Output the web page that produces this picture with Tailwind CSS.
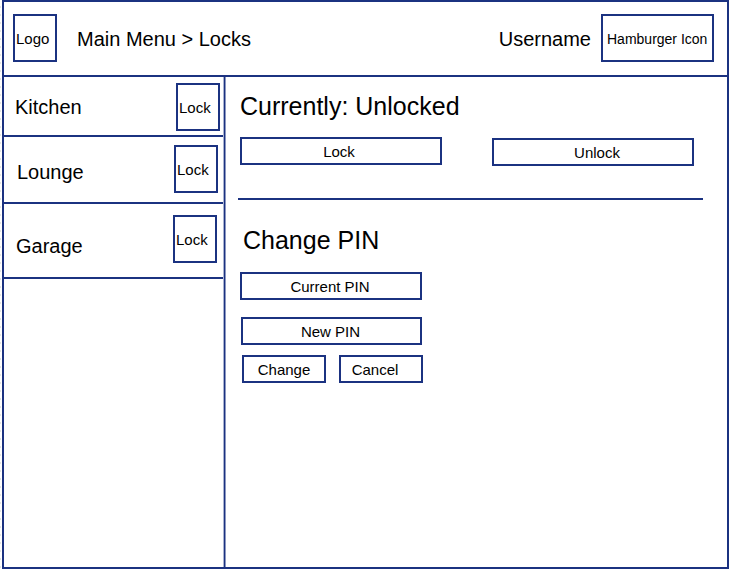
<!DOCTYPE html>
<html lang="en">
<head>
<meta charset="utf-8">
<meta name="viewport" content="width=device-width, initial-scale=1">
<title>Locks</title>
<script src="https://cdn.jsdelivr.net/npm/@tailwindcss/browser@4"></script>
</head>
<body class="bg-white bg-[linear-gradient(#e6e6e6_2px,transparent_2px)] bg-[length:1px_8px] bg-repeat-y bg-[position:0_6px] pl-[2px] pr-px pb-[3px] text-black font-['Liberation_Sans',Arial,sans-serif] text-[15px] leading-5">
<div class="flex min-h-[calc(100vh-3px)] flex-col border-2 border-[#1b3281] bg-white">
  <header class="flex items-center border-b-2 border-[#1b3281] pt-3 pr-[13px] pb-[13px] pl-[9px]">
    <a href="#" class="flex h-12 w-11 items-center border-2 border-[#1b3281] pt-0.5 pl-px">Logo</a>
    <nav aria-label="Breadcrumb" class="ml-5 pt-0.5 text-xl"><a href="#">Main Menu</a> &gt; <a href="#">Locks</a></nav>
    <span class="ml-auto pt-0.5 text-xl">Username</span>
    <button type="button" class="ml-[10px] flex h-12 w-[113px] items-center border-2 border-[#1b3281] pt-0.5 pl-1 text-sm whitespace-nowrap">Hamburger Icon</button>
  </header>

  <div class="flex grow">
    <aside class="w-[219px] shrink-0">
      <ul>
        <li class="flex items-center justify-between border-b-2 border-[#1b3281] pt-1.5 pr-[3px] pb-1 pl-[11px]">
          <span class="text-xl">Kitchen</span>
          <button type="button" class="flex h-12 w-11 items-center border-2 border-[#1b3281] pt-0.5 pl-px">Lock</button>
        </li>
        <li class="flex items-center justify-between border-b-2 border-[#1b3281] pt-2 pr-[5px] pb-[9px] pl-[13px]">
          <span class="pt-1.5 text-xl">Lounge</span>
          <button type="button" class="flex h-12 w-11 items-center border-2 border-[#1b3281] pt-0.5 pl-px">Lock</button>
        </li>
        <li class="flex items-center justify-between border-b-2 border-[#1b3281] pt-[11px] pr-1.5 pb-[14px] pl-3">
          <span class="pt-[14px] text-xl">Garage</span>
          <button type="button" class="flex h-12 w-11 items-center border-2 border-[#1b3281] pt-0.5 pl-px">Lock</button>
        </li>
      </ul>
    </aside>
    <div class="w-[3px] shrink-0 border-x border-l-[#a9b2d0] border-r-[#8d98c0] bg-[#1b3281]"></div>

    <main class="grow pt-[11px] pr-6 pl-3">
      <section class="border-b-2 border-[#1b3281] pb-8">
        <h1 class="pl-0.5 text-[25px] leading-9">Currently: Unlocked</h1>
        <div class="mt-[13px] flex justify-between pr-[9px] pl-0.5">
          <button type="button" class="h-7 w-[202px] border-2 border-[#1b3281] pt-0.5 pr-1">Lock</button>
          <button type="button" class="mt-px h-7 w-[202px] border-2 border-[#1b3281] pt-0.5 pl-2">Unlock</button>
        </div>
      </section>
      <form class="w-[185px] pt-[22px] pl-0.5">
        <h2 class="pl-[3px] text-[25px] leading-9">Change PIN</h2>
        <input type="password" aria-label="Current PIN" placeholder="Current PIN" class="mt-[14px] block h-7 w-[182px] border-2 border-[#1b3281] pr-0.5 text-center placeholder:text-black">
        <input type="password" aria-label="New PIN" placeholder="New PIN" class="mt-[17px] ml-px block h-7 w-[181px] border-2 border-[#1b3281] pr-0.5 text-center placeholder:text-black">
        <div class="mt-[10px] flex justify-between pl-0.5">
          <button type="submit" class="h-7 w-[84px] border-2 border-[#1b3281] pt-0.5">Change</button>
          <button type="reset" class="h-7 w-[84px] border-2 border-[#1b3281] pt-0.5 pr-3">Cancel</button>
        </div>
      </form>
    </main>
  </div>
</div>
</body>
</html>
